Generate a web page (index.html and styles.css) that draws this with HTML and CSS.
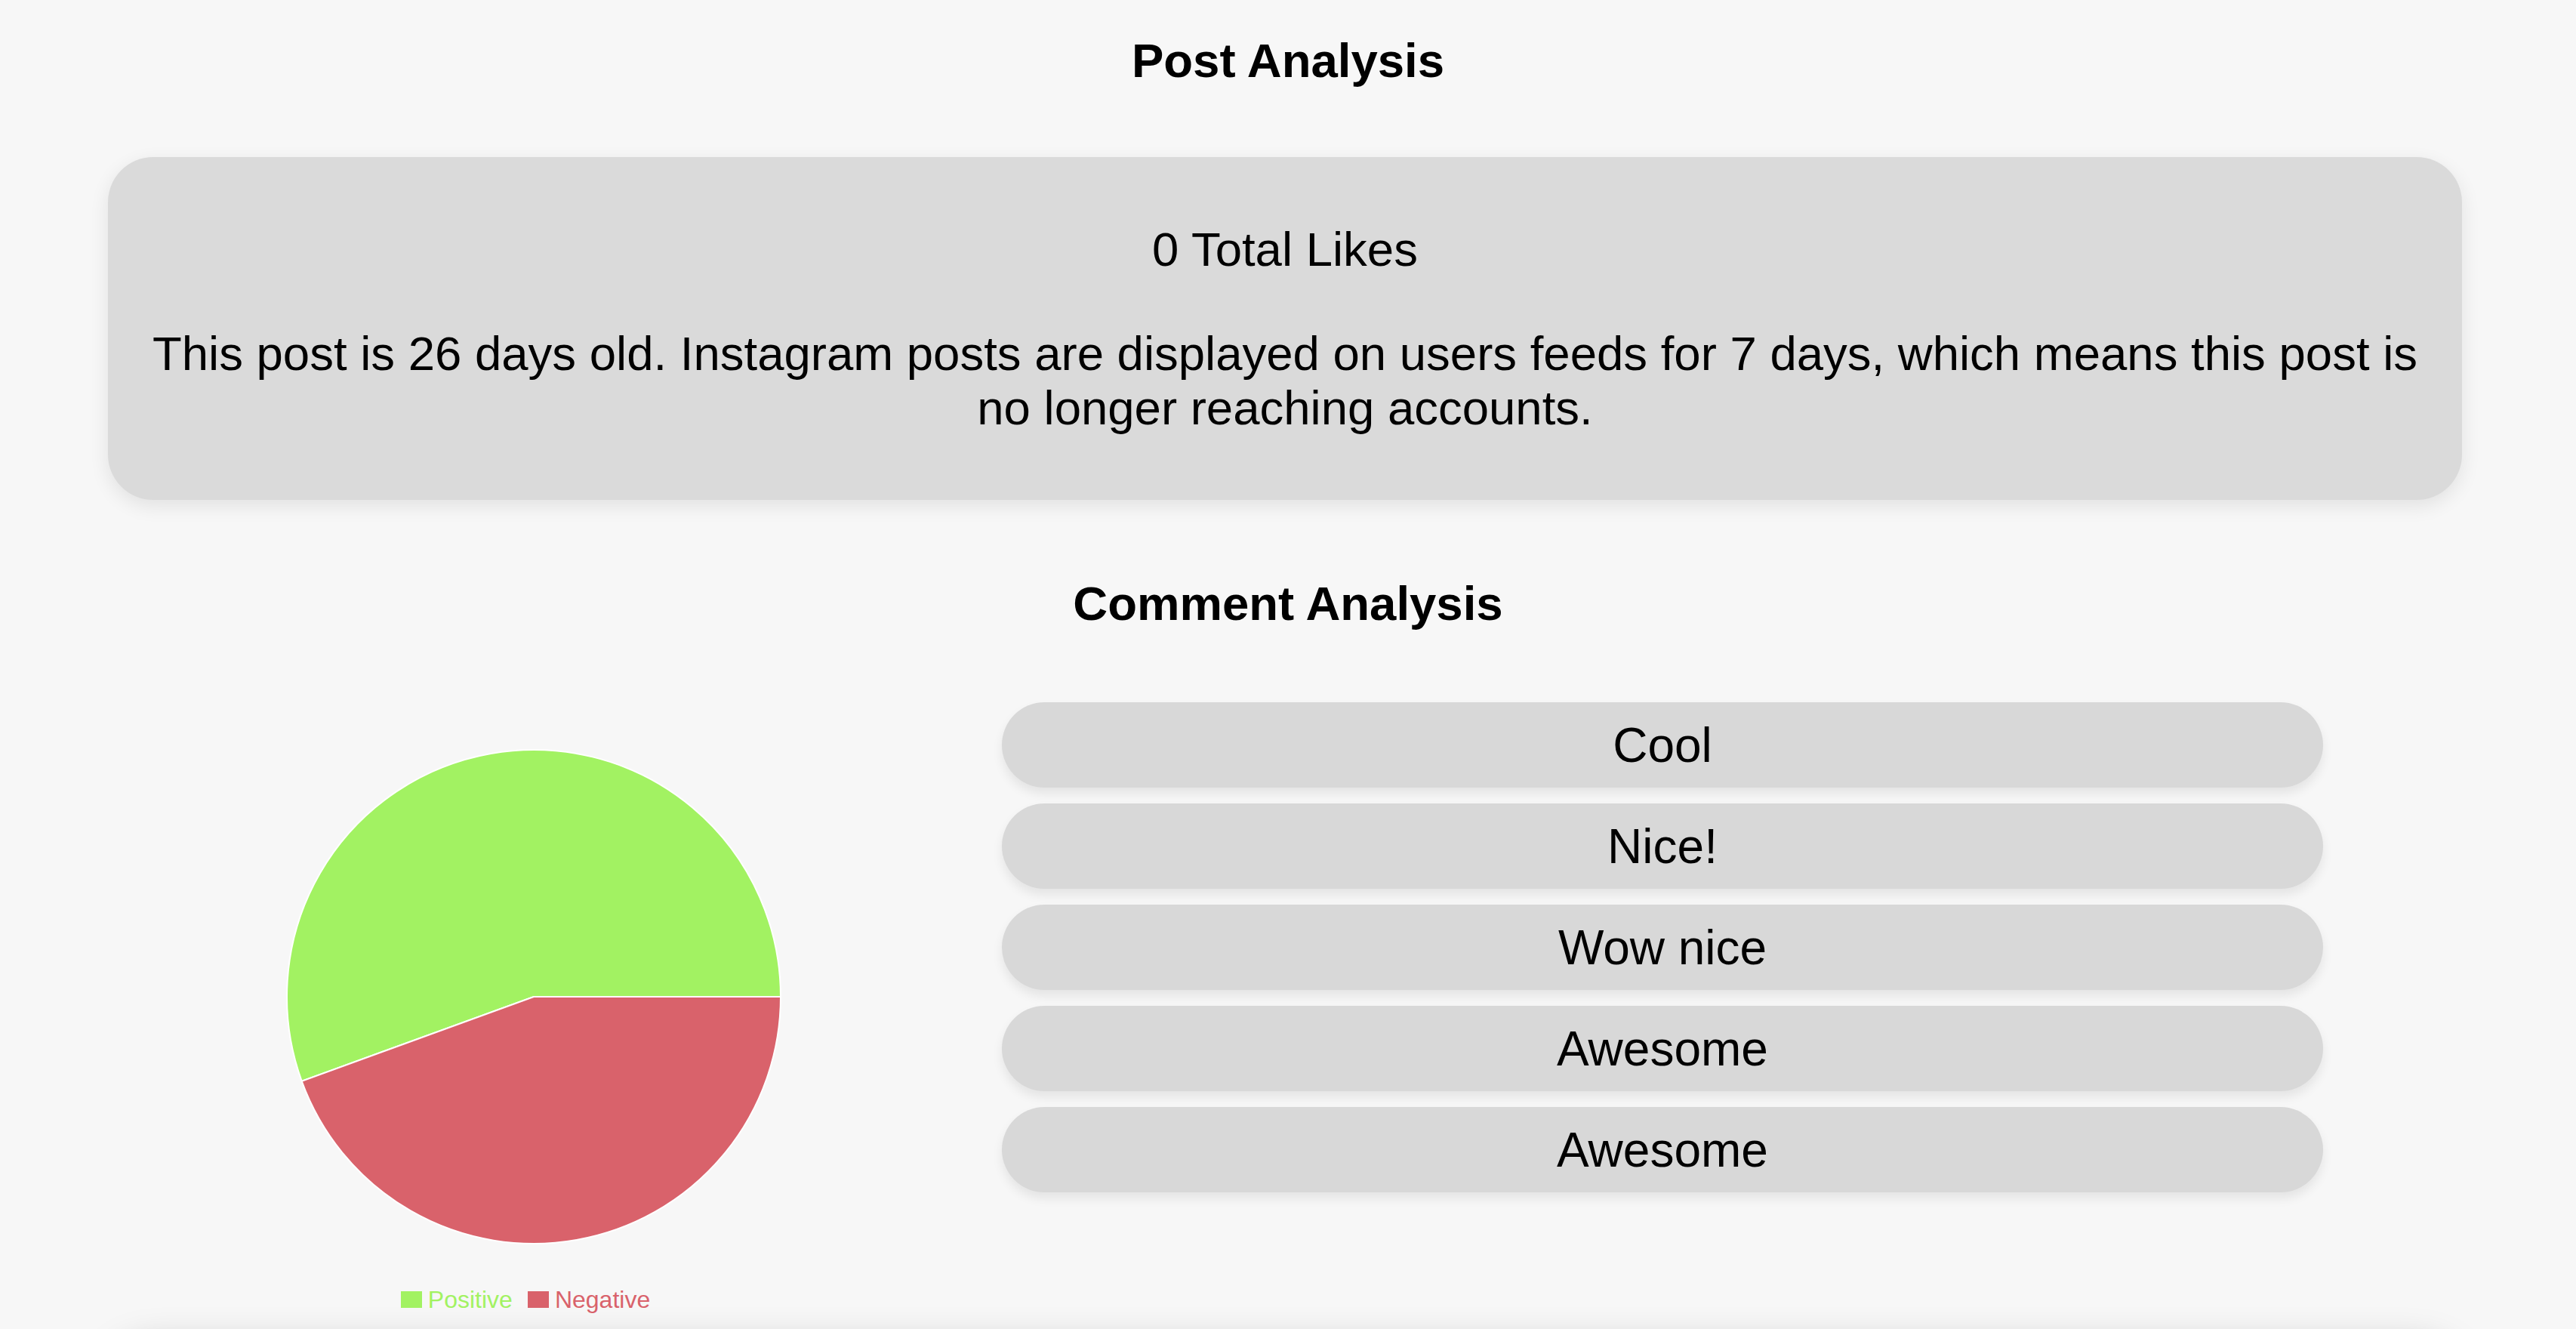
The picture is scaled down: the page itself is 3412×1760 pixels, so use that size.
FILE: index.html
```html
<!DOCTYPE html>
<html lang="en">
<head>
<meta charset="utf-8">
<title>Post Analysis</title>
<link rel="stylesheet" href="styles.css">
</head>
<body>
<main class="page">
  <h1 class="section-title post-title">Post Analysis</h1>
  <section class="card summary">
    <p class="likes">0 Total Likes</p>
    <p class="age">This post is 26 days old. Instagram posts are displayed on users feeds for 7 days, which means this post is no longer reaching accounts.</p>
  </section>

  <h1 class="section-title comment-title">Comment Analysis</h1>
  <div class="comments">
    <div class="chart-col">
      <svg class="pie" width="660" height="660" viewBox="0 0 660 660">
        <path d="M330 330 L22.7 441.8 A327 327 0 1 1 657 330 Z" fill="#a2f262" stroke="#ffffff" stroke-width="2"/>
        <path d="M330 330 L657 330 A327 327 0 0 1 22.7 441.8 Z" fill="#d9626b" stroke="#ffffff" stroke-width="2"/>
      </svg>
      <div class="legend">
        <span class="legend-item positive"><span class="swatch"></span>Positive</span>
        <span class="legend-item negative"><span class="swatch"></span>Negative</span>
      </div>
    </div>
    <ul class="comment-list">
      <li class="comment">Cool</li>
      <li class="comment">Nice!</li>
      <li class="comment">Wow nice</li>
      <li class="comment">Awesome</li>
      <li class="comment">Awesome</li>
    </ul>
  </div>

  <section class="card next"></section>
</main>
</body>
</html>
```

FILE: styles.css
```css
html, body {
  margin: 0;
  padding: 0;
  background: #f7f7f7;
}

body {
  font-family: "Liberation Sans", Arial, Helvetica, sans-serif;
  color: #000;
}

.page {
  display: flex;
  flex-direction: column;
  padding-top: 44px;
}

.section-title {
  margin: 0;
  text-align: center;
  font-size: 63.5px;
  line-height: 72px;
  font-weight: bold;
}

.card {
  margin-left: 143px;
  width: 3118px;
  box-sizing: border-box;
  background: #dadada;
  border-radius: 60px;
  box-shadow: 0 8px 26px rgba(0, 0, 0, 0.09);
}

.summary {
  margin-top: 92px;
  padding: 86px 30px;
  text-align: center;
  font-size: 63.5px;
  line-height: 72px;
}

.summary p {
  margin: 0;
}

.summary .age {
  margin-top: 66px;
}

.comment-title {
  margin-top: 101px;
}

.comments {
  display: flex;
  align-items: flex-start;
  margin-top: 95px;
  margin-left: 143px;
}

.chart-col {
  width: 1128px;
  padding-top: 60px;
  display: flex;
  flex-direction: column;
  align-items: center;
}

.pie {
  display: block;
}

.legend {
  margin-top: 53px;
  display: flex;
  gap: 20px;
  font-size: 32px;
  line-height: 36px;
  margin-left: -22px;
}

.legend-item {
  display: flex;
  align-items: center;
  gap: 8px;
}

.swatch {
  width: 28px;
  height: 22px;
  display: inline-block;
}

.positive { color: #a2f262; }
.positive .swatch { background: #a2f262; }
.negative { color: #d9626b; }
.negative .swatch { background: #d9626b; }

.comment-list {
  list-style: none;
  margin: 0 0 0 56px;
  padding: 0;
  width: 1750px;
  display: flex;
  flex-direction: column;
  gap: 21px;
}

.comment {
  background: #d8d8d8;
  border-radius: 57px;
  height: 113px;
  display: flex;
  align-items: center;
  justify-content: center;
  font-size: 64px;
  box-shadow: 0 8px 14px rgba(0, 0, 0, 0.08);
}

.next {
  margin-top: 44px;
  height: 600px;
  box-shadow: 0 0 50px rgba(0, 0, 0, 0.25);
  background: #dadada;
}
```
